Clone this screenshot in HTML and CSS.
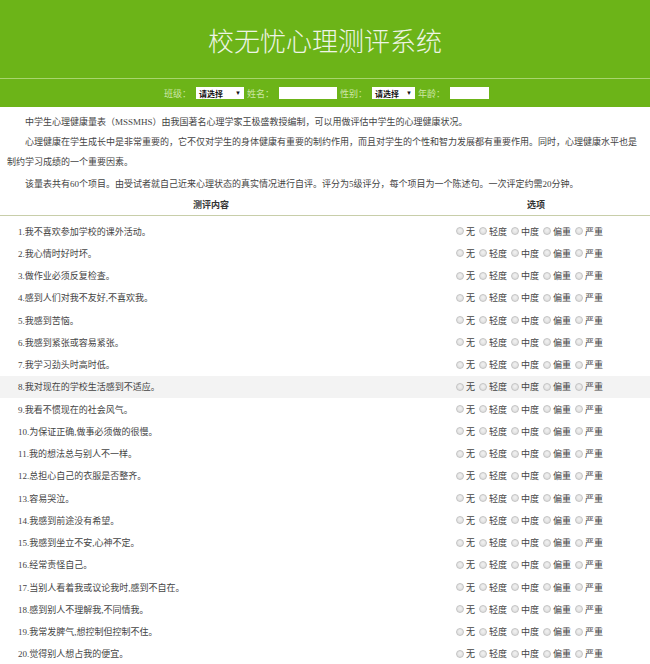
FILE: index.html
```html
<!DOCTYPE html>
<html lang="zh">
<head>
<meta charset="utf-8">
<title>校无忧心理测评系统</title>
<link rel="stylesheet" href="styles.css">
</head>
<body>
<header class="top">
  <h1 class="title">校无忧心理测评系统</h1>
  <div class="form-bar">
    <span class="lbl">班级：</span><span class="sel sel-wide">请选择 <i>▼</i></span>
    <span class="lbl">姓名：</span><span class="inp inp-name"></span>
    <span class="lbl">性别：</span><span class="sel">请选择 <i>▼</i></span>
    <span class="lbl">年龄：</span><span class="inp inp-age"></span>
  </div>
</header>
<section class="intro">
  <p>中学生心理健康量表（MSSMHS）由我国著名心理学家王极盛教授编制，可以用做评估中学生的心理健康状况。</p>
  <p>心理健康在学生成长中是非常重要的，它不仅对学生的身体健康有重要的制约作用，而且对学生的个性和智力发展都有重要作用。同时，心理健康水平也是制约学习成绩的一个重要因素。</p>
  <p class="last">该量表共有60个项目。由受试者就自己近来心理状态的真实情况进行自评。评分为5级评分，每个项目为一个陈述句。一次评定约需20分钟。</p>
</section>
<div class="table">
  <div class="thead"><div class="th">测评内容</div><div class="th">选项</div></div>
  <div id="rows"></div>
</div>
<script>
var items=["我不喜欢参加学校的课外活动。","我心情时好时坏。","做作业必须反复检查。","感到人们对我不友好,不喜欢我。","我感到苦恼。","我感到紧张或容易紧张。","我学习劲头时高时低。","我对现在的学校生活感到不适应。","我看不惯现在的社会风气。","为保证正确,做事必须做的很慢。","我的想法总与别人不一样。","总担心自己的衣服是否整齐。","容易哭泣。","我感到前途没有希望。","我感到坐立不安,心神不定。","经常责怪自己。","当别人看着我或议论我时,感到不自在。","感到别人不理解我,不同情我。","我常发脾气,想控制但控制不住。","觉得别人想占我的便宜。"];
var opts=["无","轻度","中度","偏重","严重"];
var html="";
items.forEach(function(t,i){
  html+='<div class="row'+(i===7?' hl':'')+'"><div class="q">'+(i+1)+'.'+t+'</div><div class="opts">';
  opts.forEach(function(o){html+='<label class="opt"><input type="radio" name="q'+(i+1)+'"><span>'+o+'</span></label>';});
  html+='</div></div>';
});
document.getElementById("rows").innerHTML=html;
</script>
</body>
</html>
```
FILE: styles.css
```css
body{margin:0;background:#fff;font-family:"Liberation Serif","Noto Sans CJK SC",serif;color:#444;font-size:9px;}
.top{background:#6cb418;}
.title{margin:0;height:78px;line-height:80px;text-align:center;font-family:"Noto Sans CJK SC",sans-serif;font-weight:300;font-size:26px;color:#eef4e6;border-bottom:1px solid #a9d56e;}
.form-bar{height:28px;display:flex;align-items:center;justify-content:center;font-size:9px;color:#cde6a6;}
.lbl{margin:0 5px 0 3px;}
.sel{display:inline-flex;align-items:center;justify-content:space-between;box-sizing:border-box;height:12px;width:43px;padding:0 3px;background:#fff;color:#111;font-weight:bold;font-size:8px;}
.sel-wide{width:48px;}
.sel i{font-style:normal;font-size:6px;}
.inp{display:inline-block;height:12px;background:#fff;}
.inp-name{width:58px;}
.inp-age{width:39px;}
.intro{padding:5px 5px 0 7px;}
.intro p{margin:0;line-height:20px;text-indent:2em;}
.intro p.last{margin-top:2px;}
.thead{display:grid;grid-template-columns:422px 1fr;height:21px;align-items:center;border-bottom:1px solid #c8ceaa;margin-bottom:4px;}
.th{text-align:center;font-weight:bold;color:#333;}
.row{display:grid;grid-template-columns:422px 1fr;height:22.25px;align-items:center;}
.row.hl{background:#f3f3f3;}
.q{padding-left:18px;color:#444;}
.opts{padding-left:34px;display:flex;align-items:center;}
.opt{display:inline-flex;align-items:center;margin-right:4px;}
.opt input{appearance:none;-webkit-appearance:none;margin:0 2px 0 0;width:8px;height:8px;border-radius:50%;border:1px solid #c4c4c4;background:radial-gradient(circle at 50% 40%,#f2f2f2,#d8d8d8);box-sizing:border-box;}
```
